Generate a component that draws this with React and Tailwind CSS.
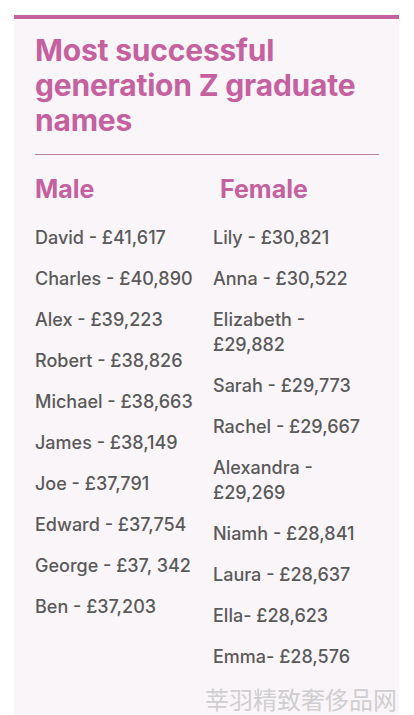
import React from 'react';

const male = [
  'David - £41,617',
  'Charles - £40,890',
  'Alex - £39,223',
  'Robert - £38,826',
  'Michael - £38,663',
  'James - £38,149',
  'Joe - £37,791',
  'Edward - £37,754',
  'George - £37, 342',
  'Ben - £37,203',
];

const female = [
  'Lily - £30,821',
  'Anna - £30,522',
  'Elizabeth - £29,882',
  'Sarah - £29,773',
  'Rachel - £29,667',
  'Alexandra - £29,269',
  'Niamh - £28,841',
  'Laura - £28,637',
  'Ella- £28,623',
  'Emma- £28,576',
];

export default function App() {
  return (
    <div className="relative w-[414px] h-[715px] bg-white overflow-hidden font-['Inter',sans-serif]">
      <div className="absolute left-[14px] top-[15px] w-[385px] h-[720px] bg-[#faf5f9] border-t-4 border-[#c5619f]">
        <div className="pl-[21px] pr-[20px] pt-[14px]">
          <h1 className="text-[30px] leading-[35px] font-bold text-[#c5619f] tracking-[-0.2px]">
            Most successful generation Z graduate names
          </h1>
          <div className="mt-[16px] h-px bg-[#b9839f]" />

          <div className="flex mt-[19px]">
            <div className="w-[178px]">
              <h2 className="text-[25px] leading-[30px] font-bold text-[#c5619f]">Male</h2>
              <ul className="mt-[21px] flex flex-col gap-[16px]">
                {male.map((m) => (
                  <li key={m} className="text-[18px] leading-[25px] font-medium text-[#5a5a5a]">{m}</li>
                ))}
              </ul>
            </div>
            <div className="flex-1">
              <h2 className="pl-[7px] text-[25px] leading-[30px] font-bold text-[#c5619f]">Female</h2>
              <ul className="mt-[21px] flex flex-col gap-[16px] w-[160px]">
                {female.map((f) => (
                  <li key={f} className="text-[18px] leading-[25px] font-medium text-[#5a5a5a]">{f}</li>
                ))}
              </ul>
            </div>
          </div>
        </div>
      </div>
      <div className="absolute right-[17px] bottom-[2px] text-[24px] leading-[28px] text-[#cfcfcf] font-['Noto_Sans_CJK_SC',sans-serif]">
        莘羽精致奢侈品网
      </div>
    </div>
  );
}
